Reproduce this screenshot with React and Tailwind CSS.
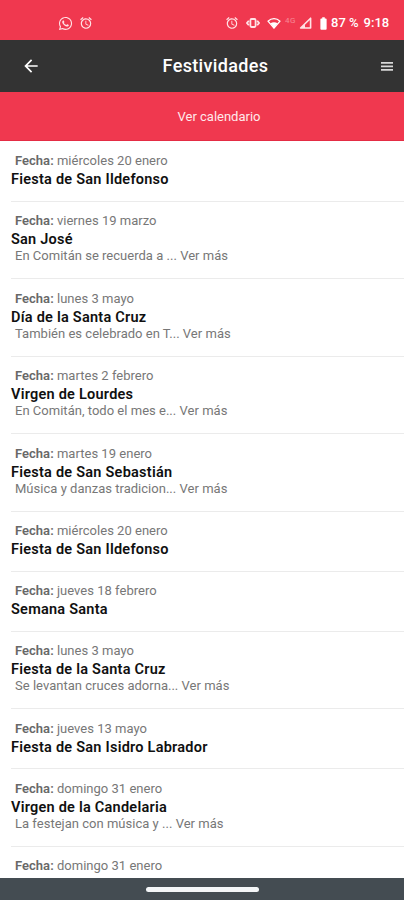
import { FaWhatsapp } from "react-icons/fa";
import { MdAlarm, MdArrowBack, MdBatteryFull } from "react-icons/md";

const festividades = [
  { fecha: "miércoles 20 enero", nombre: "Fiesta de San Ildefonso" },
  { fecha: "viernes 19 marzo", nombre: "San José", descripcion: "En Comitán se recuerda a ..." },
  { fecha: "lunes 3 mayo", nombre: "Día de la Santa Cruz", descripcion: "También es celebrado en T..." },
  { fecha: "martes 2 febrero", nombre: "Virgen de Lourdes", descripcion: "En Comitán, todo el mes e..." },
  { fecha: "martes 19 enero", nombre: "Fiesta de San Sebastián", descripcion: "Música y danzas tradicion..." },
  { fecha: "miércoles 20 enero", nombre: "Fiesta de San Ildefonso" },
  { fecha: "jueves 18 febrero", nombre: "Semana Santa" },
  { fecha: "lunes 3 mayo", nombre: "Fiesta de la Santa Cruz", descripcion: "Se levantan cruces adorna..." },
  { fecha: "jueves 13 mayo", nombre: "Fiesta de San Isidro Labrador" },
  { fecha: "domingo 31 enero", nombre: "Virgen de la Candelaria", descripcion: "La festejan con música y ..." },
  { fecha: "domingo 31 enero", nombre: "" },
];

const VibrateIcon = () => (
  <svg width="14" height="12" viewBox="0 0 14 12" fill="none" stroke="currentColor" strokeWidth="1.8">
    <rect x="4.4" y="2" width="5.2" height="8" rx="1.2" />
    <path d="M2.8 3.7L1 6l1.8 2.3M11.2 3.7L13 6l-1.8 2.3" />
  </svg>
);

const WifiIcon = () => (
  <svg width="14" height="12" viewBox="0 0 14 12">
    <path d="M1 4.2C4.4 0.8 9.6 0.8 13 4.2L7 11.2z" fill="none" stroke="currentColor" strokeWidth="1.3" strokeLinejoin="round" />
    <path d="M3.4 6.2C5.6 4.9 8.4 4.9 10.6 6.2L7 11z" fill="currentColor" />
  </svg>
);

const SignalIcon = () => (
  <svg width="13" height="12" viewBox="0 0 13 12">
    <path d="M1.6 11L11.6 1.2V11z" fill="none" stroke="currentColor" strokeWidth="1.6" strokeLinejoin="round" />
    <path d="M2 11L6 7.4V11z" fill="currentColor" />
  </svg>
);

const StatusBar = () => (
  <div className="flex h-10 shrink-0 items-center bg-[#f0384f] pt-[6px] pl-[58px] text-[#ffe3e6]">
    <FaWhatsapp size={15} />
    <MdAlarm size={14} className="ml-[6px]" />
    <MdAlarm size={14} className="ml-[132px]" />
    <span className="ml-[7px]"><VibrateIcon /></span>
    <span className="ml-[7px] text-white"><WifiIcon /></span>
    <span className="ml-[4px] w-[13px] pb-[5px] text-[8px] leading-[8px] tracking-[0.4px] opacity-45">4G</span>
    <span className="ml-[1px]"><SignalIcon /></span>
    <MdBatteryFull size={15} className="ml-[4px] text-white" />
    <span className="text-[13px] font-medium whitespace-nowrap text-white">87 %</span>
    <span className="ml-[5px] text-[13px] font-medium text-white">9:18</span>
  </div>
);

const Festividad = ({ fecha, nombre, descripcion }) => (
  <li
    className={`ml-[11px] shrink-0 border-b border-[#ebebeb] pt-[11.4px] ${descripcion ? "h-[77.45px]" : "h-[60px]"}`}
  >
    <p className="ml-[4px] text-[13px] leading-[16px] tracking-[0.02px] text-[#777777]">
      <span className="font-semibold text-[#686868]">Fecha:</span> {fecha}
    </p>
    <h2 className="mt-[1.1px] text-[14.5px] leading-[20px] font-semibold tracking-[0.24px] text-[#101010]">{nombre}</h2>
    {descripcion && (
      <p className="-mt-px ml-[4px] text-[13px] leading-[13px] tracking-[0.02px] text-[#777777]">{descripcion} Ver más</p>
    )}
  </li>
);

export default function App() {
  return (
    <div className="flex h-[900px] w-[404px] flex-col overflow-hidden bg-white font-['Roboto',sans-serif]">
      <StatusBar />

      {/* Header */}
      <header className="grid h-[52px] shrink-0 grid-cols-[1fr_auto_1fr] items-center bg-[#333333] pr-[11px] pl-[21px] text-white">
        <MdArrowBack size={20} />
        <h1 className="mr-[-17px] pb-px text-[18px] font-medium tracking-[0.35px]">Festividades</h1>
        <svg className="justify-self-end" width="12" height="10" viewBox="0 0 12 10" fill="#d8d8d8">
          <path d="M0 1h12v1.7H0zM0 4.5h12v1.7H0zM0 8h12v1.7H0z" />
        </svg>
      </header>

      <button className="h-[49px] shrink-0 border-b border-[#e42c44] bg-[#f0384f] pt-[2px] pl-[34px] text-[13px] text-[#ffe9eb]">
        Ver calendario
      </button>

      <ul className="flex min-h-0 flex-1 flex-col overflow-hidden pt-px">
        {festividades.map((festividad, index) => (
          <Festividad key={index} {...festividad} />
        ))}
      </ul>

      {/* Gesture bar */}
      <div className="flex h-[22px] shrink-0 items-center justify-center bg-[#444c52]">
        <div className="h-[5px] w-[113px] rounded-full bg-[#f4f6f8]" />
      </div>
    </div>
  );
}
